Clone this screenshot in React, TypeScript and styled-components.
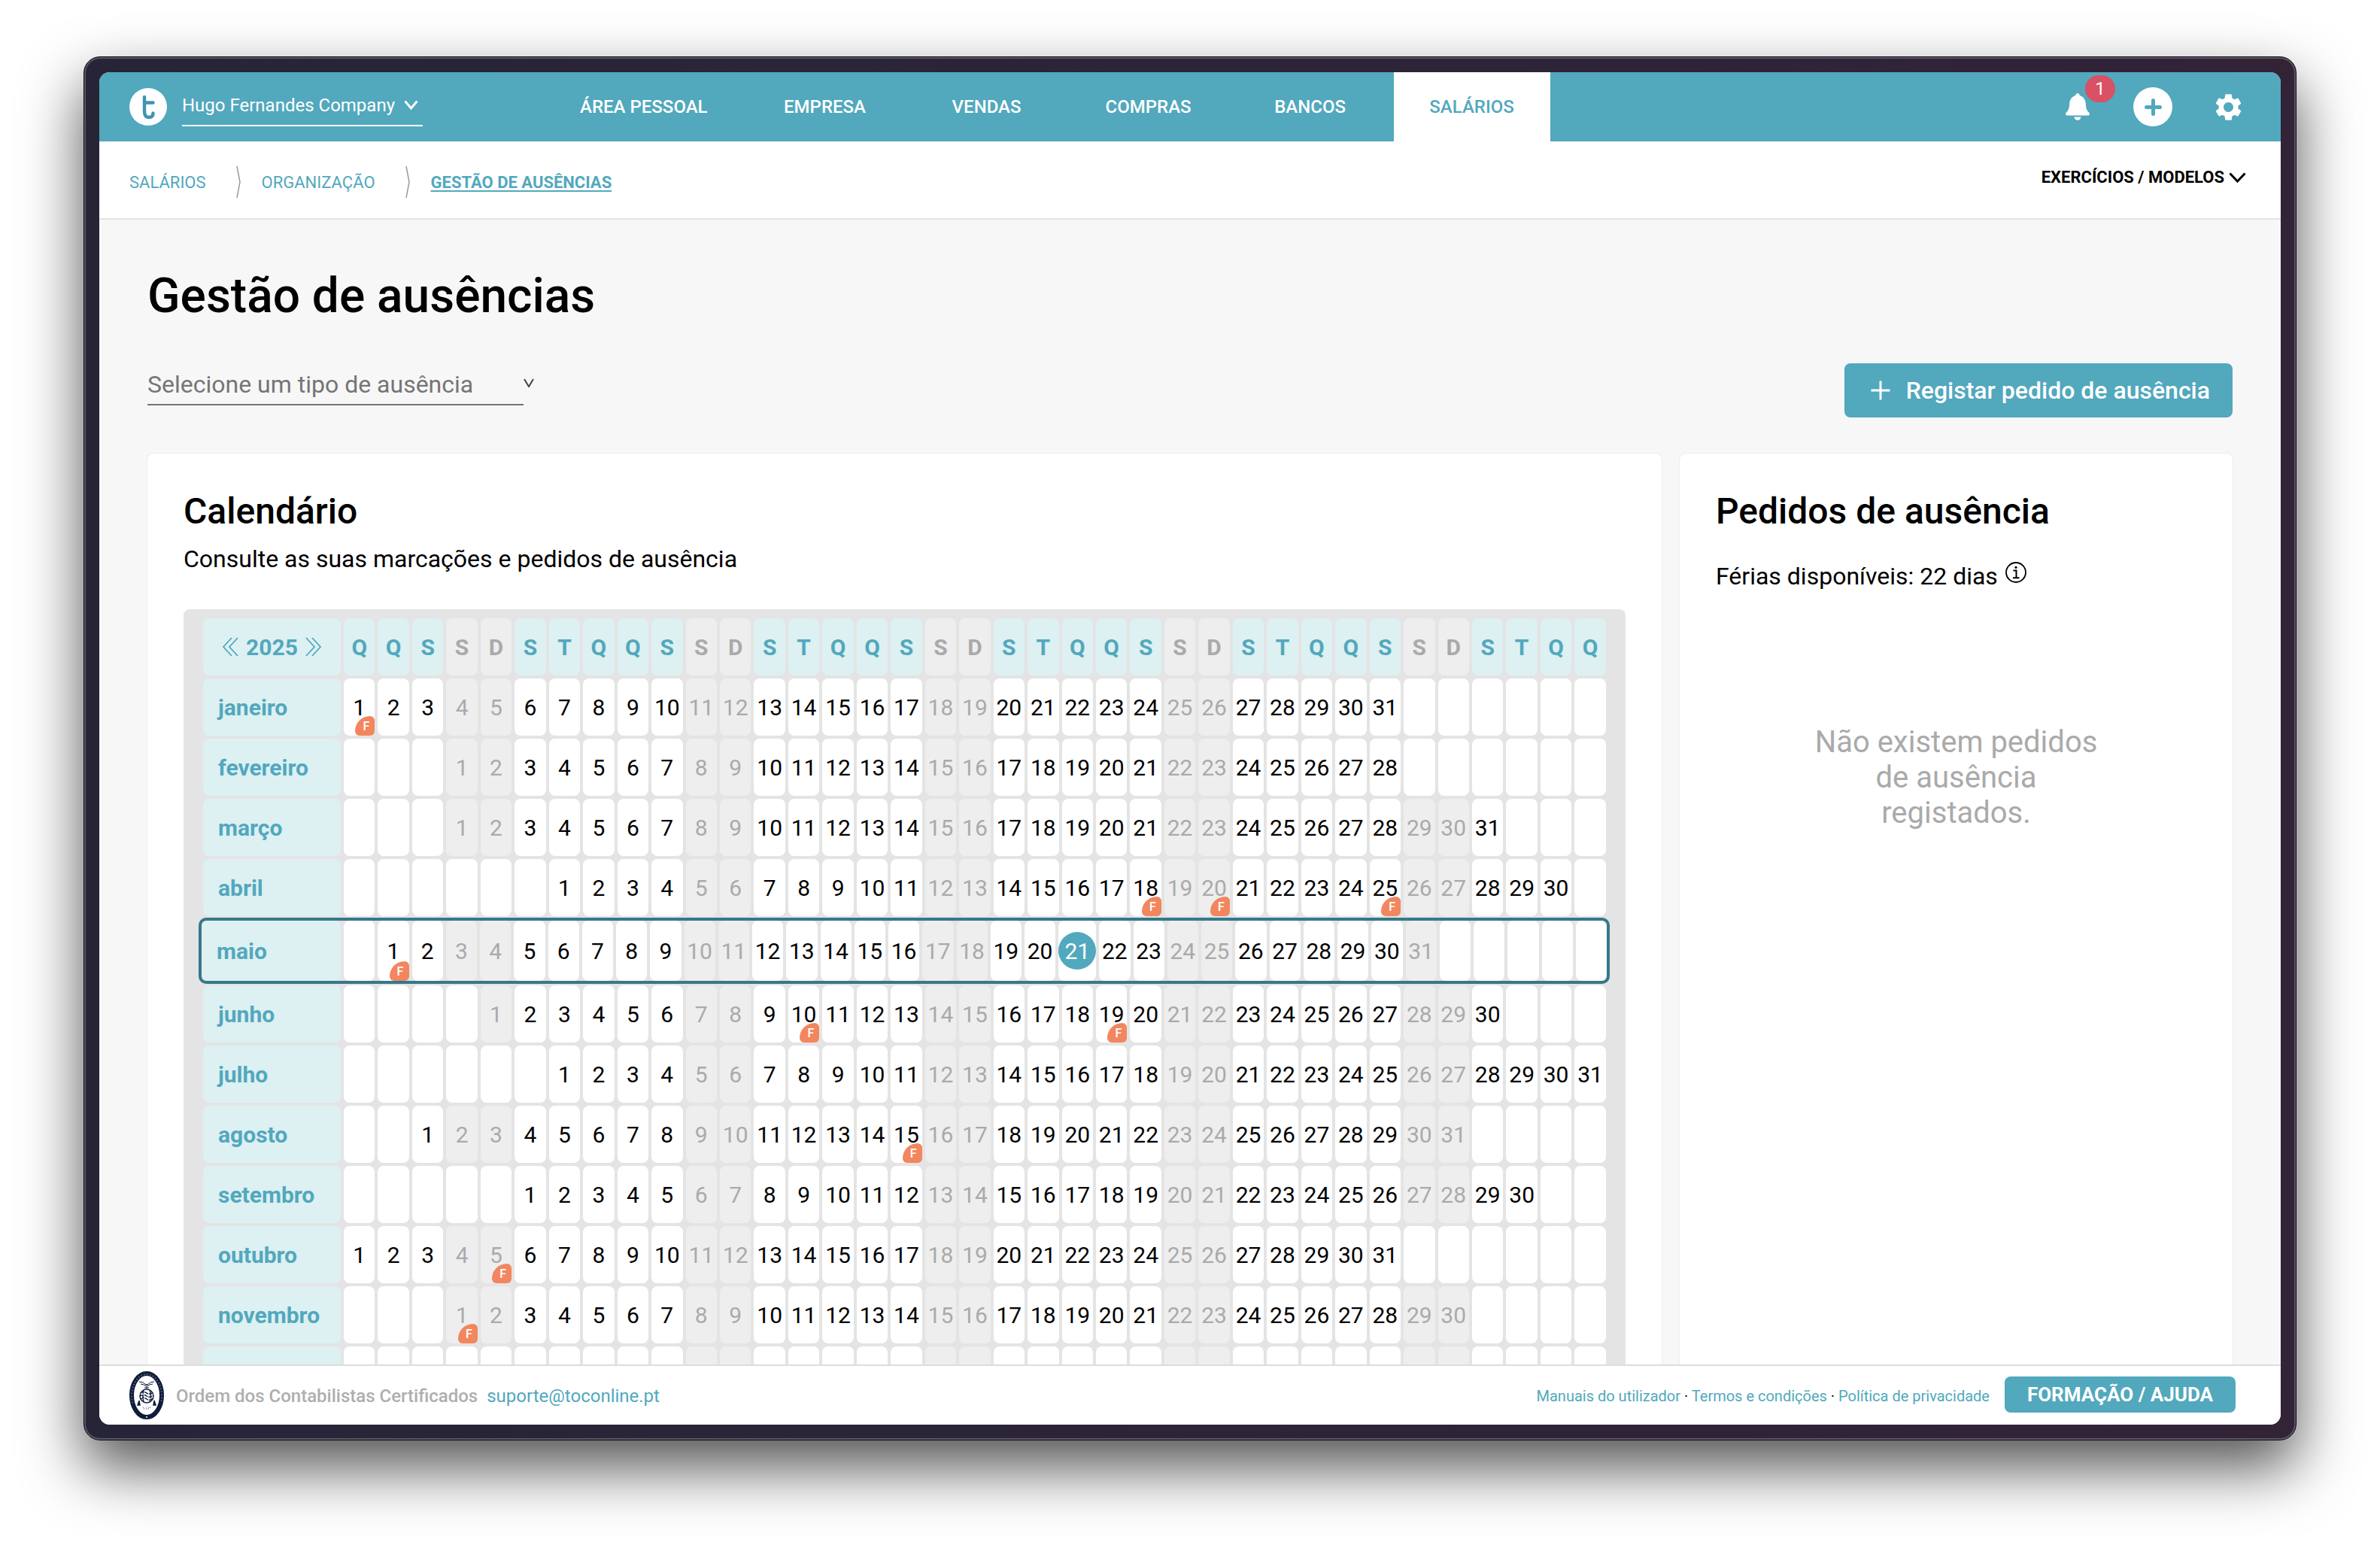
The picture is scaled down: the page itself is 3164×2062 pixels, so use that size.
import React, { useState } from 'react';
import styled, { createGlobalStyle, css } from 'styled-components';
import { MdSettings } from 'react-icons/md';

const teal = '#52a8bd';
const tealDark = '#37788a';
const tealPale = '#ddf0f2';
const line = '#e4e4e4';
const muted = '#aaaaaa';

const GlobalStyle = createGlobalStyle`
  *, *::before, *::after { box-sizing: border-box; }
  body {
    margin: 0;
    background: #ffffff;
    color: #000000;
    font-family: Roboto, "Liberation Sans", sans-serif;
  }
  h1, h2, p { margin: 0; }
  button, select { font-family: inherit; }
  button {
    margin: 0;
    padding: 0;
    border: 0;
    background: none;
    color: inherit;
    cursor: pointer;
  }
  a { color: inherit; text-decoration: none; }
  svg { display: block; flex: none; }
`;

/* ---------- window ---------- */

const Desktop = styled.div`
  display: flex;
  height: 100vh;
  padding: 75px 111px 147px;
`;

const WindowFrame = styled.div`
  flex: 1;
  min-width: 0;
  display: flex;
  padding: 18px;
  border: 1px solid #08080c;
  border-radius: 22px;
  background: linear-gradient(90deg, #262537, #322337);
  box-shadow: inset 0 0 0 2px #5c5664, 0 36px 80px rgba(0, 0, 0, 0.68);
`;

const Screen = styled.div`
  flex: 1;
  min-width: 0;
  display: flex;
  flex-direction: column;
  margin: 2px;
  border-radius: 14px;
  overflow: hidden;
  background: #f7f7f7;
`;

/* ---------- top bar ---------- */

const TopBar = styled.header`
  flex: none;
  display: flex;
  align-items: center;
  height: 92px;
  padding: 0 44px 0 40px;
  background: ${teal};
  color: #ffffff;
`;

const CompanyButton = styled.button`
  display: flex;
  align-items: center;
  justify-content: space-between;
  width: 320px;
  height: 52px;
  margin-left: 20px;
  padding: 0 6px 2px 0;
  border-bottom: 2px solid #ffffff;
  font-size: 24px;
  font-weight: 400;
`;

const MainNav = styled.nav`
  display: flex;
  align-self: stretch;
  gap: 7px;
  margin-left: 164px;
`;

const NavItem = styled.a<{ $active?: boolean }>`
  display: flex;
  align-items: center;
  justify-content: center;
  min-width: 208px;
  padding: 0 45px;
  font-size: 24px;
  font-weight: 500;
  background: ${(p) => (p.$active ? '#ffffff' : 'transparent')};
  color: ${(p) => (p.$active ? teal : '#ffffff')};
`;

const Actions = styled.div`
  display: flex;
  gap: 48px;
  margin-left: auto;
`;

const IconButton = styled.button<{ $filled?: boolean }>`
  position: relative;
  display: flex;
  align-items: center;
  justify-content: center;
  width: 52px;
  height: 52px;
  border-radius: 50%;
  background: ${(p) => (p.$filled ? '#ffffff' : 'transparent')};
  color: ${(p) => (p.$filled ? teal : '#ffffff')};
`;

const Badge = styled.span`
  position: absolute;
  top: -16px;
  left: 36px;
  width: 40px;
  border-radius: 18px;
  background: #d95164;
  font-size: 24px;
  line-height: 36px;
  text-align: center;
`;

/* ---------- breadcrumb bar ---------- */

const SubBar = styled.div`
  flex: none;
  display: flex;
  align-items: flex-start;
  justify-content: space-between;
  height: 104px;
  padding: 32px 46px 0 40px;
  border-bottom: 2px solid ${line};
  background: #ffffff;
`;

const Breadcrumb = styled.nav`
  display: flex;
  align-items: center;
  height: 44px;
  color: ${teal};
  font-size: 22px;
`;

const Crumb = styled.a<{ $current?: boolean }>`
  ${(p) =>
    p.$current &&
    css`
      font-weight: 700;
      text-decoration: underline;
      text-decoration-thickness: 2px;
      text-underline-offset: 3px;
    `}
`;

const CrumbSeparator = styled.svg`
  margin: 0 28px 0 40px;
`;

const ModelsButton = styled.button`
  display: flex;
  align-items: center;
  gap: 6px;
  font-size: 22px;
  font-weight: 700;
  line-height: 32px;
`;

/* ---------- page ---------- */

const Main = styled.main`
  flex: 1;
  min-height: 0;
  overflow-y: auto;
  scrollbar-width: none;
  padding: 64px 64px 0;
`;

const PageTitle = styled.h1`
  font-size: 64px;
  font-weight: 500;
  line-height: 76px;
`;

const Toolbar = styled.div`
  display: flex;
  align-items: flex-start;
  justify-content: space-between;
  margin-top: 51px;
`;

const SelectField = styled.label`
  display: flex;
  align-items: flex-start;
`;

const TypeSelect = styled.select`
  appearance: none;
  width: 500px;
  height: 56px;
  padding: 2px 0 0;
  border: 0;
  border-bottom: 2px solid #757575;
  border-radius: 0;
  background: transparent;
  color: #757575;
  font-size: 32px;
`;

const SelectArrow = styled.svg`
  margin-top: 20px;
`;

const RegisterButton = styled.button`
  display: flex;
  align-items: center;
  gap: 20px;
  height: 72px;
  padding: 0 30px 0 34px;
  border-radius: 8px;
  background: ${teal};
  color: #ffffff;
  font-size: 32px;
  font-weight: 500;
`;

const Columns = styled.div`
  display: grid;
  grid-template-columns: minmax(0, 671fr) minmax(0, 245fr);
  gap: 24px;
  margin-top: 48px;
`;

const Card = styled.section`
  padding: 48px;
  border-radius: 8px;
  background: #ffffff;
  box-shadow: 0 0 2px rgba(0, 0, 0, 0.14);
`;

const CardTitle = styled.h2`
  font-size: 48px;
  font-weight: 500;
  line-height: 58px;
`;

const CardText = styled.p`
  margin-top: 15px;
  font-size: 32px;
  line-height: 38px;
`;

const Balance = styled.p`
  display: flex;
  align-items: flex-start;
  gap: 10px;
  margin-top: 38px;
  font-size: 32px;
  line-height: 38px;
`;

const EmptyMessage = styled.p`
  max-width: 400px;
  margin: 178px auto 0;
  color: ${muted};
  font-size: 40px;
  line-height: 47px;
  text-align: center;
`;

/* ---------- calendar ---------- */

const CalendarBoard = styled.div`
  margin-top: 48px;
  padding: 12px 26px;
  border-radius: 8px;
  background: ${line};
`;

const CalendarTable = styled.table`
  display: block;
  font-size: 30px;

  thead,
  tbody {
    display: flex;
    flex-direction: column;
    gap: 4px;
  }
  thead {
    margin-bottom: 4px;
  }
`;

const Row = styled.tr<{ $current?: boolean }>`
  display: flex;
  gap: 4px;
  height: 76px;
  ${(p) =>
    p.$current &&
    css`
      height: 88px;
      margin: -2px -5px -2px -6px;
      border: 4px solid ${tealDark};
      border-radius: 10px;
    `}
`;

const cell = css`
  display: flex;
  align-items: center;
  padding: 0;
  border-radius: 8px;
`;

const YearCell = styled.th`
  ${cell}
  flex: none;
  justify-content: center;
  gap: 10px;
  width: 183px;
  background: ${tealPale};
  color: ${teal};
`;

const MonthCell = styled.th<{ $current?: boolean }>`
  ${cell}
  flex: none;
  width: ${(p) => (p.$current ? 185 : 183)}px;
  padding-left: 20px;
  background: ${tealPale};
  color: ${teal};
`;

const WeekdayCell = styled.th<{ $weekend: boolean }>`
  ${cell}
  flex: 1 1 0;
  min-width: 0;
  justify-content: center;
  background: ${(p) => (p.$weekend ? '#eeeeee' : tealPale)};
  color: ${(p) => (p.$weekend ? muted : teal)};
`;

const DayCell = styled.td<{ $weekend?: boolean; $today?: boolean }>`
  ${cell}
  position: relative;
  flex: ${(p) => (p.$today ? '0 0 50px' : '1 1 0')};
  min-width: 0;
  justify-content: center;
  background: ${(p) => (p.$weekend ? '#eeeeee' : '#ffffff')};
  color: ${(p) => (p.$weekend ? muted : '#000000')};
`;

const Today = styled.span`
  display: flex;
  align-items: center;
  justify-content: center;
  width: 50px;
  height: 50px;
  border-radius: 50%;
  background: ${teal};
  color: #ffffff;
`;

const HolidayTag = styled.span`
  position: absolute;
  right: 0;
  bottom: 0;
  width: 26px;
  padding: 2px 0 0 3px;
  border-radius: 20px 6px 6px 6px;
  background: #f2865f;
  color: #ffffff;
  font-size: 16px;
  font-weight: 500;
  line-height: 24px;
  text-align: center;
`;

/* ---------- footer ---------- */

const Footer = styled.footer`
  flex: none;
  display: flex;
  align-items: center;
  height: 80px;
  padding: 0 60px 0 40px;
  border-top: 2px solid #dddddd;
  background: #ffffff;
`;

const Organisation = styled.strong`
  margin: 2px 12px 0 16px;
  color: #aeaeae;
  font-size: 24px;
  font-weight: 500;
`;

const SupportLink = styled.a`
  margin-top: 2px;
  color: ${teal};
  font-size: 24px;
`;

const LegalLinks = styled.nav`
  margin: 2px 20px 0 auto;
  font-size: 20px;

  a {
    color: ${teal};
  }
`;

const HelpButton = styled.button`
  height: 48px;
  margin-bottom: 2px;
  padding: 0 30px;
  border-radius: 8px;
  background: ${teal};
  color: #ffffff;
  font-size: 26px;
  font-weight: 700;
`;

/* ---------- drawings ---------- */

const Logo = () => (
  <svg width="50" height="50" viewBox="0 0 50 50" role="img" aria-label="TOConline">
    <circle cx="25" cy="25" r="25" fill="#ffffff" />
    <path
      d="M20 12 V31 Q20 39 26 39 Q31.500 39 31.500 33.500 M20 19.500 H31.500"
      fill="none"
      stroke="#3f93b3"
      strokeWidth="4.400"
      strokeLinecap="round"
    />
  </svg>
);

const Chevron = ({ width, height, stroke }: { width: number; height: number; stroke: number }) => (
  <svg width={width} height={height} viewBox={`0 0 ${width} ${height}`} fill="none" aria-hidden="true">
    <path
      d={`M${stroke / 2} ${stroke / 2} L${width / 2} ${height - stroke} L${width - stroke / 2} ${stroke / 2}`}
      stroke="currentColor"
      strokeWidth={stroke}
    />
  </svg>
);

const BellIcon = () => (
  <svg width="32" height="36" viewBox="0 0 32 36" fill="currentColor" aria-hidden="true">
    <path d="M16 0c-1.700 0-2.600 1.100-2.800 2.900C8.500 4.100 5.600 8.200 5.200 13.500 4.800 19.500 4.600 22 .9 25.600c-1.400 1.600-.8 3.900 1.500 3.900h27.200c2.300 0 2.900-2.300 1.500-3.900-3.700-3.600-3.900-6.100-4.300-12.100-.4-5.300-3.300-9.400-8-10.600C18.600 1.100 17.700 0 16 0z" />
    <path d="M11.500 31.600h9c-.3 2.700-2.100 4.400-4.500 4.400s-4.200-1.700-4.500-4.400z" />
  </svg>
);

const PlusIcon = ({ size, stroke }: { size: number; stroke: number }) => (
  <svg width={size} height={size} viewBox={`0 0 ${size} ${size}`} aria-hidden="true">
    <path
      d={`M${size / 2} ${stroke / 2} V${size - stroke / 2} M${stroke / 2} ${size / 2} H${size - stroke / 2}`}
      stroke="currentColor"
      strokeWidth={stroke}
      strokeLinecap={stroke > 3 ? 'round' : 'butt'}
    />
  </svg>
);

const DoubleAngle = ({ next }: { next?: boolean }) => (
  <svg width="22" height="26" viewBox="0 0 22 26" fill="none" stroke="currentColor" strokeWidth="1.800" aria-hidden="true">
    <path d={next ? 'M1 1 L12 13 L1 25 M9 1 L20 13 L9 25' : 'M21 1 L10 13 L21 25 M13 1 L2 13 L13 25'} />
  </svg>
);

const InfoIcon = () => (
  <svg width="28" height="28" viewBox="0 0 28 28" fill="none" stroke="#000000" aria-label="Informação" role="img">
    <circle cx="14" cy="14" r="13" strokeWidth="1.800" />
    <path d="M10.500 11.500 H14.500 V21 M10 21.300 H18.500" strokeWidth="2" />
    <circle cx="14" cy="7.300" r="1.600" fill="#000000" stroke="none" />
  </svg>
);

const Seal = () => (
  <svg width="46" height="64" viewBox="0 0 46 64" fill="none" stroke="#111b3a" role="img" aria-label="Ordem dos Contabilistas Certificados">
    <ellipse cx="23" cy="32" rx="20" ry="29" strokeWidth="6" />
    <path d="M4 42 A20 29 0 1 1 42 42" stroke="#5d6580" strokeWidth="2" strokeDasharray="1.500 2.500" />
    <path d="M13 14 Q18 13.500 22 18 Q23 16 24 18 Q28 13.500 33 14 M15 17 Q19 17 22 20 M31 17 Q27 17 24 20 M23 17 V23 M20 22 H26" strokeWidth="1" />
    <circle cx="23" cy="33" r="9" strokeWidth="1.400" />
    <path d="M14.500 29 Q19 26 23 29 T31.500 28 M14 33 Q19 30 23 33 T32 32 M15 37 Q19 34 23 37 T31 36 M19 25 Q17 33 19 41 M27 25 Q30 33 27 41" strokeWidth="1.500" strokeDasharray="5 1" />
    <path d="M13 39 L11 45 L14 45 Z M33 39 L32 45 L35 45 Z" fill="#111b3a" strokeWidth="1.500" />
    <path d="M18 47 L20 51 M22 48 L23 51 M26 47 L25 51 M29 47 L27 49" stroke="#8d93a5" />
    <circle cx="23" cy="61" r="1" fill="#ffffff" stroke="none" />
  </svg>
);

/* ---------- data ---------- */

const sections = ['ÁREA PESSOAL', 'EMPRESA', 'VENDAS', 'COMPRAS', 'BANCOS', 'SALÁRIOS'];
const weekdayLetters = ['Q', 'Q', 'S', 'S', 'D', 'S', 'T'];
const columns = Array.from({ length: 37 }, (_, i) => i);
const isWeekend = (column: number) => column % 7 === 3 || column % 7 === 4;

interface Month {
  name: string;
  offset: number;
  days: number;
  holidays: number[];
  today?: number;
}

const months: Month[] = [
  { name: 'janeiro', offset: 0, days: 31, holidays: [1] },
  { name: 'fevereiro', offset: 3, days: 28, holidays: [] },
  { name: 'março', offset: 3, days: 31, holidays: [] },
  { name: 'abril', offset: 6, days: 30, holidays: [18, 20, 25] },
  { name: 'maio', offset: 1, days: 31, holidays: [1], today: 21 },
  { name: 'junho', offset: 4, days: 30, holidays: [10, 19] },
  { name: 'julho', offset: 6, days: 31, holidays: [] },
  { name: 'agosto', offset: 2, days: 31, holidays: [15] },
  { name: 'setembro', offset: 5, days: 30, holidays: [] },
  { name: 'outubro', offset: 0, days: 31, holidays: [5] },
  { name: 'novembro', offset: 3, days: 30, holidays: [1] },
  { name: 'dezembro', offset: 5, days: 31, holidays: [1, 8, 25] },
];

const MonthRow = ({ month }: { month: Month }) => {
  const current = month.today !== undefined;
  return (
    <Row $current={current}>
      <MonthCell scope="row" $current={current}>
        {month.name}
      </MonthCell>
      {columns.map((column) => {
        const day = column - month.offset + 1;
        if (day < 1 || day > month.days) return <DayCell key={column} />;
        const today = day === month.today;
        return (
          <DayCell key={column} $weekend={isWeekend(column)} $today={today}>
            {today ? <Today>{day}</Today> : day}
            {month.holidays.includes(day) && <HolidayTag>F</HolidayTag>}
          </DayCell>
        );
      })}
    </Row>
  );
};

const Calendar = () => (
  <CalendarBoard>
    <CalendarTable>
      <thead>
        <Row>
          <YearCell scope="col">
            <button type="button" aria-label="Ano anterior">
              <DoubleAngle />
            </button>
            2025
            <button type="button" aria-label="Ano seguinte">
              <DoubleAngle next />
            </button>
          </YearCell>
          {columns.map((column) => (
            <WeekdayCell key={column} scope="col" $weekend={isWeekend(column)}>
              {weekdayLetters[column % 7]}
            </WeekdayCell>
          ))}
        </Row>
      </thead>
      <tbody>
        {months.map((month) => (
          <MonthRow key={month.name} month={month} />
        ))}
      </tbody>
    </CalendarTable>
  </CalendarBoard>
);

const Separator = () => (
  <CrumbSeparator width="6" height="44" viewBox="0 0 6 44" fill="none" stroke="#999999" strokeWidth="1.500" aria-hidden="true">
    <path d="M1 1 L5 22 L1 43" />
  </CrumbSeparator>
);

export default function App() {
  const [type, setType] = useState('');

  return (
    <>
      <GlobalStyle />
      <Desktop>
        <WindowFrame>
          <Screen>
            <TopBar>
              <Logo />
              <CompanyButton type="button">
                Hugo Fernandes Company
                <Chevron width={19} height={14} stroke={3} />
              </CompanyButton>
              <MainNav>
                {sections.map((name) => (
                  <NavItem key={name} href="#" $active={name === 'SALÁRIOS'}>
                    {name}
                  </NavItem>
                ))}
              </MainNav>
              <Actions>
                <IconButton type="button" aria-label="Notificações">
                  <BellIcon />
                  <Badge>1</Badge>
                </IconButton>
                <IconButton type="button" aria-label="Adicionar" $filled>
                  <PlusIcon size={23} stroke={5} />
                </IconButton>
                <IconButton type="button" aria-label="Definições">
                  <MdSettings size={43} />
                </IconButton>
              </Actions>
            </TopBar>

            <SubBar>
              <Breadcrumb>
                <Crumb href="#">SALÁRIOS</Crumb>
                <Separator />
                <Crumb href="#">ORGANIZAÇÃO</Crumb>
                <Separator />
                <Crumb href="#" $current>
                  GESTÃO DE AUSÊNCIAS
                </Crumb>
              </Breadcrumb>
              <ModelsButton type="button">
                EXERCÍCIOS / MODELOS
                <Chevron width={23} height={15} stroke={3} />
              </ModelsButton>
            </SubBar>

            <Main>
              <PageTitle>Gestão de ausências</PageTitle>
              <Toolbar>
                <SelectField>
                  <TypeSelect
                    aria-label="Tipo de ausência"
                    value={type}
                    onChange={(event) => setType(event.target.value)}
                  >
                    <option value="">Selecione um tipo de ausência</option>
                  </TypeSelect>
                  <SelectArrow width="14" height="12" viewBox="0 0 14 12" fill="none" stroke="#444444" strokeWidth="2" aria-hidden="true">
                    <path d="M1 1 L7 11 L13 1" />
                  </SelectArrow>
                </SelectField>
                <RegisterButton type="button">
                  <PlusIcon size={28} stroke={3} />
                  Registar pedido de ausência
                </RegisterButton>
              </Toolbar>

              <Columns>
                <Card>
                  <CardTitle>Calendário</CardTitle>
                  <CardText>Consulte as suas marcações e pedidos de ausência</CardText>
                  <Calendar />
                </Card>
                <Card>
                  <CardTitle>Pedidos de ausência</CardTitle>
                  <Balance>
                    Férias disponíveis: 22 dias
                    <InfoIcon />
                  </Balance>
                  <EmptyMessage>Não existem pedidos de ausência registados.</EmptyMessage>
                </Card>
              </Columns>
            </Main>

            <Footer>
              <Seal />
              <Organisation>Ordem dos Contabilistas Certificados</Organisation>
              <SupportLink href="mailto:suporte@toconline.pt">suporte@toconline.pt</SupportLink>
              <LegalLinks>
                <a href="#">Manuais do utilizador</a> · <a href="#">Termos e condições</a> ·{' '}
                <a href="#">Política de privacidade</a>
              </LegalLinks>
              <HelpButton type="button">FORMAÇÃO / AJUDA</HelpButton>
            </Footer>
          </Screen>
        </WindowFrame>
      </Desktop>
    </>
  );
}
